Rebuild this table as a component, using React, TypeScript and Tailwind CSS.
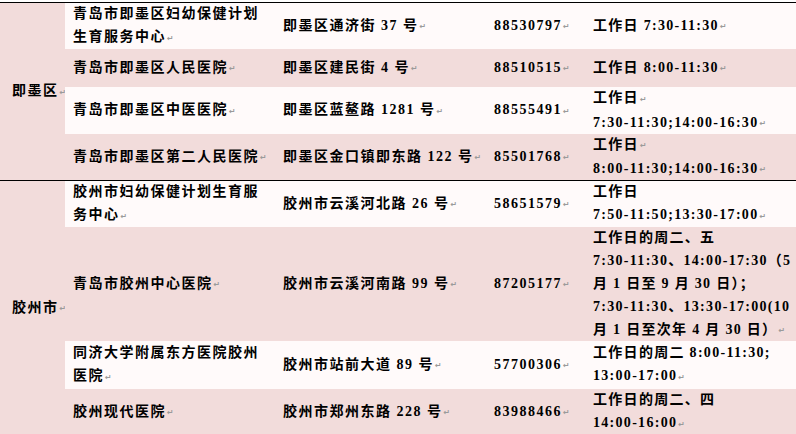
const MARK = '↵';

type Row = {
  height: string;
  bg: string;
  name: string[];
  addr: string[];
  tel: string;
  time: string[];
};

type Group = { district: string; rows: Row[] };

const WHITE = 'bg-[#fffafa]';
const PINK = 'bg-[#f2dcdb]';

const groups: Group[] = [
  {
    district: '即墨区↵',
    rows: [
      {
        height: 'h-[46px]',
        bg: WHITE,
        name: ['青岛市即墨区妇幼保健计划', '生育服务中心↵'],
        addr: ['即墨区通济街 37 号↵'],
        tel: '88530797↵',
        time: ['工作日 7:30-11:30↵'],
      },
      {
        height: 'h-[38px]',
        bg: PINK,
        name: ['青岛市即墨区人民医院↵'],
        addr: ['即墨区建民街 4 号↵'],
        tel: '88510515↵',
        time: ['工作日 8:00-11:30↵'],
      },
      {
        height: 'h-[47px]',
        bg: WHITE,
        name: ['青岛市即墨区中医医院↵'],
        addr: ['即墨区蓝鳌路 1281 号↵'],
        tel: '88555491↵',
        time: ['工作日↵', '7:30-11:30;14:00-16:30↵'],
      },
      {
        height: 'h-[46px]',
        bg: PINK,
        name: ['青岛市即墨区第二人民医院↵'],
        addr: ['即墨区金口镇即东路 122 号↵'],
        tel: '85501768↵',
        time: ['工作日↵', '8:00-11:30;14:00-16:30↵'],
      },
    ],
  },
  {
    district: '胶州市↵',
    rows: [
      {
        height: 'h-[46px]',
        bg: WHITE,
        name: ['胶州市妇幼保健计划生育服', '务中心↵'],
        addr: ['胶州市云溪河北路 26 号↵'],
        tel: '58651579↵',
        time: ['工作日', '7:50-11:50;13:30-17:00↵'],
      },
      {
        height: 'h-[114px]',
        bg: PINK,
        name: ['青岛市胶州中心医院↵'],
        addr: ['胶州市云溪河南路 99 号↵'],
        tel: '87205177↵',
        time: [
          '工作日的周二、五',
          '7:30-11:30、14:00-17:30（5',
          '月 1 日至 9 月 30 日）；',
          '7:30-11:30、13:30-17:00(10',
          '月 1 日至次年 4 月 30 日）↵',
        ],
      },
      {
        height: 'h-[48px]',
        bg: WHITE,
        name: ['同济大学附属东方医院胶州', '医院↵'],
        addr: ['胶州市站前大道 89 号↵'],
        tel: '57700306↵',
        time: ['工作日的周二 8:00-11:30;', '13:00-17:00↵'],
      },
      {
        height: 'h-[46px]',
        bg: PINK,
        name: ['胶州现代医院↵'],
        addr: ['胶州市郑州东路 228 号↵'],
        tel: '83988466↵',
        time: ['工作日的周二、四', '14:00-16:00↵'],
      },
    ],
  },
];

function Line({ text }: { text: string }) {
  const marked = text.endsWith(MARK);
  const body = marked ? text.slice(0, -1) : text;
  return (
    <div className="whitespace-nowrap">
      {body}
      {marked && (
        <span className="ml-[1px] align-middle text-[8px] tracking-normal text-[#9a9a9a] [font-family:'DejaVu_Sans',sans-serif]">
          {MARK}
        </span>
      )}
    </div>
  );
}

function Cell({ lines, className = '' }: { lines: string[]; className?: string }) {
  return (
    <div className={`flex flex-col justify-center overflow-hidden pl-2 ${className}`}>
      {lines.map((l, i) => (
        <Line key={i} text={l} />
      ))}
    </div>
  );
}

export default function App() {
  return (
    <div className="h-[434px] w-[796px] overflow-hidden bg-white pt-[2px] text-[14px] font-bold leading-[23px] tracking-[1.5px] text-black [font-family:'Liberation_Serif','Noto_Sans_CJK_SC',serif]">
      {groups.map((g) => (
        <section key={g.district} className="flex border-t border-black">
          <div className={`flex w-[65px] shrink-0 items-center pl-3 ${PINK}`}>
            <Line text={g.district} />
          </div>
          <div className="flex-1">
            {g.rows.map((r, i) => (
              <div
                key={i}
                className={`grid grid-cols-[210px_211px_99px_1fr] ${r.height} ${r.bg}`}
              >
                <Cell lines={r.name} />
                <Cell lines={r.addr} />
                <Cell lines={[r.tel]} />
                <Cell lines={r.time} className="tracking-[1.3px]" />
              </div>
            ))}
          </div>
        </section>
      ))}
    </div>
  );
}
